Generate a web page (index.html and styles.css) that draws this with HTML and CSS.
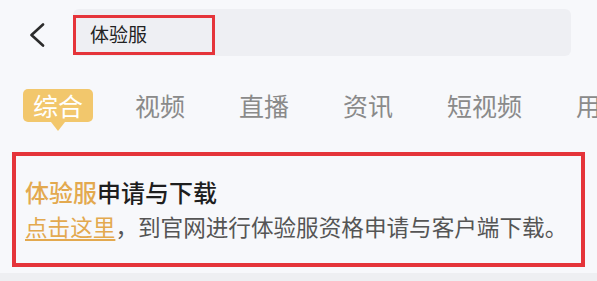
FILE: index.html
```html
<!DOCTYPE html>
<html lang="zh">
<head>
<meta charset="utf-8">
<link rel="stylesheet" href="styles.css">
</head>
<body>
<div class="page">
  <header class="top">
    <div class="back">
      <svg width="16" height="24" viewBox="0 0 16 24"><path d="M14 1.5 L2.5 12 L14 22.5" fill="none" stroke="#2b2b2b" stroke-width="2.6" stroke-linecap="round" stroke-linejoin="round"/></svg>
    </div>
    <div class="search">
      <span class="query">体验服</span>
    </div>
  </header>
  <nav class="tabs">
    <span class="tab active">综合</span>
    <span class="tab">视频</span>
    <span class="tab">直播</span>
    <span class="tab">资讯</span>
    <span class="tab">短视频</span>
    <span class="tab">用户</span>
  </nav>
  <section class="card">
    <div class="title"><span class="hl">体验服</span>申请与下载</div>
    <div class="desc"><span class="link">点击这里</span>，到官网进行体验服资格申请与客户端下载。</div>
  </section>
  <div class="strip"></div>
</div>
</body>
</html>
```
FILE: styles.css
```css
* { box-sizing: border-box; }
html, body { margin: 0; padding: 0; }
body {
  background: #f7f8fb;
  font-family: "Noto Sans CJK SC", "Noto Sans", sans-serif;
  width: 597px;
  height: 281px;
  overflow: hidden;
}
.page { display: flex; flex-direction: column; }
.top {
  display: flex;
  align-items: flex-start;
  padding-top: 9px;
  height: 89px;
}
.back {
  width: 73px;
  padding-left: 29px;
  padding-top: 14px;
  display: flex;
}
.search {
  width: 498px;
  height: 47px;
  background: #eeeff3;
  border-radius: 6px;
  display: flex;
  align-items: flex-start;
  padding-top: 6px;
}
.query {
  width: 142px;
  height: 40px;
  border: 3px solid #e5343a;
  font-size: 19px;
  color: #222;
  line-height: 32px;
  padding-left: 14px;
}
.tabs {
  display: flex;
  gap: 54px;
  padding-left: 23px;
  height: 63px;
  align-items: flex-start;
  white-space: nowrap;
}
.tab {
  flex-shrink: 0;
  font-size: 25px;
  line-height: 33px;
  color: #8a8a8a;
}
.tab.active {
  position: relative;
  background: #f2c76c;
  color: #fff;
  border-radius: 5px;
  padding: 0 10px;
  margin-right: -12px;
}
.tab.active::after {
  content: "";
  position: absolute;
  left: 50%;
  bottom: -9px;
  margin-left: -7px;
  border-left: 7px solid transparent;
  border-right: 7px solid transparent;
  border-top: 9px solid #f2c76c;
}
.card {
  margin-left: 12px;
  width: 573px;
  height: 115px;
  border: 4px solid #e5343a;
  padding: 20px 0 0 9px;
}
.title {
  font-size: 24px;
  line-height: 32px;
  color: #1e1e1e;
  font-weight: 500;
}
.hl { color: #e3a94f; }
.desc {
  font-size: 22.6px;
  line-height: 38px;
  color: #555;
  white-space: nowrap;
}
.link {
  color: #e3a94f;
  text-decoration: underline;
  text-underline-offset: 3px;
}
.strip {
  margin-top: 6px;
  height: 10px;
  background: #eeeff2;
}
```
